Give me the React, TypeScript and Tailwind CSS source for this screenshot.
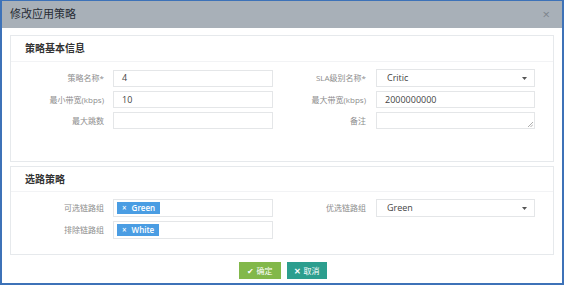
import React from 'react';

const font = { fontFamily: '"Open Sans", "Noto Sans CJK SC", sans-serif' };

function Label({ children, w }: { children: React.ReactNode; w: string }) {
  return <div className={`${w} shrink-0 text-right text-[8px] text-[#8d8d8d] leading-none`}>{children}</div>;
}

function Input({ value, w = 'w-[160px]' }: { value?: string; w?: string }) {
  return (
    <div className={`${w} h-[17px] border border-[#e4e6e8] bg-white px-[8px] flex items-center text-[9px] text-[#444]`}>
      {value}
    </div>
  );
}

function Select({ value }: { value: string }) {
  return (
    <div className="w-[159px] h-[18px] border border-[#e4e6e8] bg-white pl-[10px] pr-[7px] flex items-center justify-between text-[9px] text-[#444]">
      <span>{value}</span>
      <svg width="5" height="3" viewBox="0 0 5 3">
        <path d="M0 0 L5 0 L2.5 3 Z" fill="#555" />
      </svg>
    </div>
  );
}

function Tag({ text }: { text: string }) {
  return (
    <div className="h-[12px] px-[5px] bg-[#4a9de3] text-white text-[8px] font-semibold flex items-center gap-[5px] leading-none">
      <span>×</span>
      <span>{text}</span>
    </div>
  );
}

export default function App() {
  return (
    <div style={font} className="w-[564px] h-[285px] border-x-2 border-t border-b-2 border-[#3d72b8] bg-white flex flex-col overflow-hidden">
      {/* Header */}
      <div className="h-[27px] shrink-0 bg-[#a8b0b8] pl-[8px] pr-[12px] flex items-center justify-between">
        <span className="text-[11px] text-[#262b33]">修改应用策略</span>
        <span className="text-[13px] text-[#7c848c] leading-none">×</span>
      </div>

      {/* Body */}
      <div className="flex-1 px-[8px] pt-[7px] flex flex-col">
        {/* Basic info panel */}
        <div className="h-[127px] border border-[#e6e9ec] flex flex-col">
          <div className="h-[26px] pl-[14px] flex items-center text-[10px] font-bold text-[#333] border-b border-[#f2f3f5]">
            策略基本信息
          </div>
          <div className="pt-[7px] flex flex-col gap-[4px]">
            <div className="flex items-center">
              <Label w="w-[93px]">策略名称*</Label>
              <div className="ml-[9px]"><Input value="4" /></div>
              <Label w="w-[93px]">SLA级别名称*</Label>
              <div className="ml-[10px]"><Select value="Critic" /></div>
            </div>
            <div className="flex items-center">
              <Label w="w-[93px]">最小带宽(kbps)</Label>
              <div className="ml-[9px]"><Input value="10" /></div>
              <Label w="w-[93px]">最大带宽(kbps)</Label>
              <div className="ml-[10px]"><Input value="2000000000" w="w-[159px]" /></div>
            </div>
            <div className="flex items-center">
              <Label w="w-[93px]">最大跳数</Label>
              <div className="ml-[9px]"><Input /></div>
              <Label w="w-[93px]">备注</Label>
              <div className="ml-[10px] relative w-[159px] h-[17px] border border-[#e4e6e8]">
                <svg className="absolute right-[1px] bottom-[1px]" width="5" height="5" viewBox="0 0 5 5">
                  <path d="M5 0 L0 5 M5 2.5 L2.5 5" stroke="#999" strokeWidth="0.8" />
                </svg>
              </div>
            </div>
          </div>
        </div>

        {/* Route policy panel */}
        <div className="mt-[4px] h-[89px] border border-[#e6e9ec] flex flex-col">
          <div className="h-[25px] pl-[14px] flex items-center text-[10px] font-bold text-[#333] border-b border-[#f2f3f5]">
            选路策略
          </div>
          <div className="pt-[7px] flex flex-col gap-[4px]">
            <div className="flex items-center">
              <Label w="w-[93px]">可选链路组</Label>
              <div className="ml-[9px] w-[160px] h-[18px] border border-[#e4e6e8] pl-[3px] flex items-center">
                <Tag text="Green" />
              </div>
              <Label w="w-[93px]">优选链路组</Label>
              <div className="ml-[10px]"><Select value="Green" /></div>
            </div>
            <div className="flex items-center">
              <Label w="w-[93px]">排除链路组</Label>
              <div className="ml-[9px] w-[160px] h-[18px] border border-[#e4e6e8] pl-[3px] flex items-center">
                <Tag text="White" />
              </div>
            </div>
          </div>
        </div>

        {/* Footer buttons */}
        <div className="mt-[7px] flex justify-center gap-[6px] pl-[1px]">
          <button className="w-[42px] h-[17px] bg-[#82b84a] text-white text-[8px] flex items-center justify-center gap-[3px]">
            <span>✔</span>
            <span>确定</span>
          </button>
          <button className="w-[40px] h-[17px] bg-[#2c9e8e] text-white text-[8px] flex items-center justify-center gap-[3px]">
            <span className="font-bold">✕</span>
            <span>取消</span>
          </button>
        </div>
      </div>
    </div>
  );
}
